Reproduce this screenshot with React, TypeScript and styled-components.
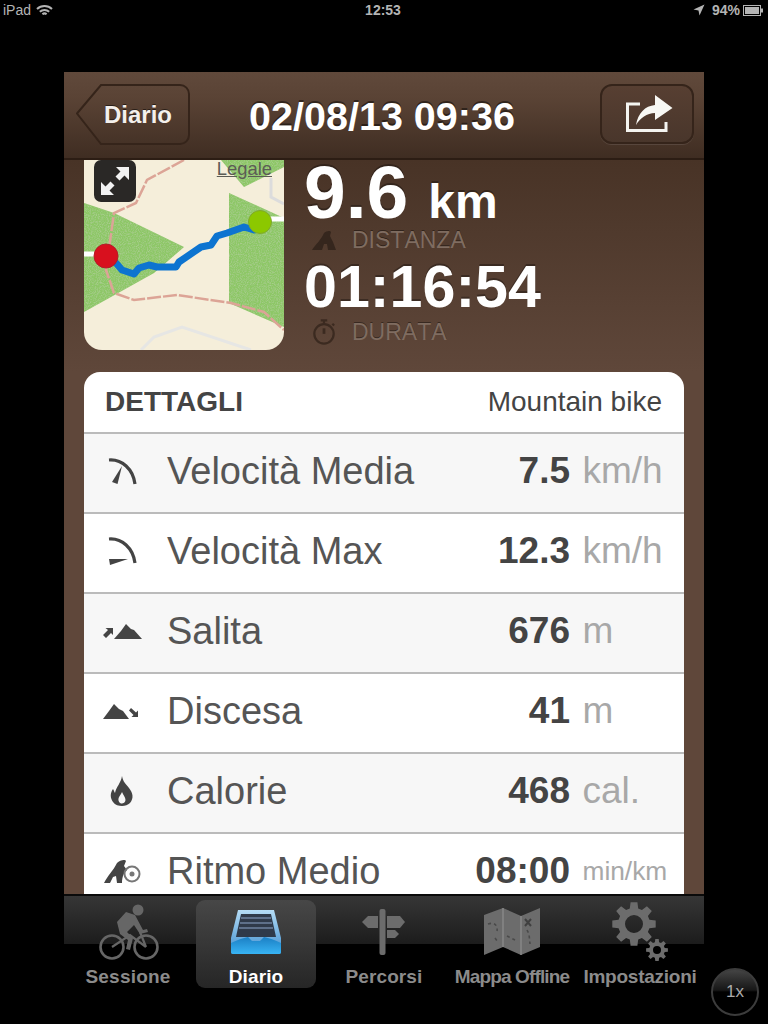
import React from 'react';
import styled, { createGlobalStyle } from 'styled-components';

const GlobalStyle = createGlobalStyle`
  html, body {
    margin: 0;
    background: #000;
    font-family: "Liberation Sans", Arial, sans-serif;
  }
`;

const Screen = styled.div`
  position: relative;
  width: 768px;
  height: 1024px;
  background: #000;
  overflow: hidden;
  display: flex;
  flex-direction: column;
  align-items: center;
`;

const StatusBar = styled.div`
  width: 100%;
  height: 20px;
  box-sizing: border-box;
  padding: 0 5px 0 3px;
  display: grid;
  grid-template-columns: 1fr auto 1fr;
  align-items: center;
  color: #b4b4b4;
  font-size: 14px;
`;

const StatusGroup = styled.div<{ $end?: boolean }>`
  display: flex;
  align-items: center;
  gap: ${(p) => (p.$end ? '3px' : '5px')};
  justify-content: ${(p) => (p.$end ? 'flex-end' : 'flex-start')};
`;

const StatusStrong = styled.span`
  font-weight: 700;
`;

const LocationGlyph = styled.svg`
  margin-right: 4px;
`;

const AppFrame = styled.div`
  margin-top: 52px;
  width: 640px;
  height: 822px;
  flex: none;
  display: flex;
  flex-direction: column;
  overflow: hidden;
  background: linear-gradient(#483326 88px, #5f473a 300px);
`;

const NavBar = styled.header`
  flex: none;
  height: 88px;
  box-sizing: border-box;
  padding: 12px 10px 0 12px;
  display: flex;
  justify-content: space-between;
  align-items: flex-start;
  background: linear-gradient(#60493b, #5a4335 30%, #3f2d22);
  border-bottom: 2px solid #2c1d14;
`;

const BackButton = styled.div`
  position: relative;
  width: 114px;
  height: 61px;
  display: flex;
  align-items: center;
  justify-content: flex-end;
  padding-right: 18px;
  box-sizing: border-box;
  color: #f4f0ec;
  font-size: 24px;
  font-weight: 700;
  text-shadow: 0 -1px 0 rgba(0, 0, 0, .5);
`;

const BackShape = styled.svg`
  position: absolute;
  left: 0;
  top: 0;
`;

const BackLabel = styled.span`
  position: relative;
`;

const NavTitle = styled.h1`
  margin: 0 26px 0 0;
  color: #fff;
  font-size: 39.5px;
  line-height: 64px;
  font-weight: 700;
  text-shadow: 0 -2px 0 rgba(0, 0, 0, .45);
`;

const ShareButton = styled.div`
  width: 94px;
  height: 60px;
  box-sizing: border-box;
  padding-left: 7px;
  border: 2px solid #35241a;
  border-radius: 12px;
  background: linear-gradient(#573f32, #49362b);
  box-shadow: 0 1px 0 rgba(255, 255, 255, .1);
  display: flex;
  align-items: center;
  justify-content: center;
`;

const Content = styled.main`
  flex: 1;
  min-height: 0;
  padding: 0 20px;
`;

const Summary = styled.section`
  display: flex;
  gap: 20px;
`;

const MapFrame = styled.div`
  position: relative;
  flex: none;
  width: 200px;
  height: 190px;
`;

const MapDrawing = styled.svg`
  display: block;
  border-radius: 0 0 18px 18px;
`;

const LegalLink = styled.span`
  position: absolute;
  top: 0;
  right: 12px;
  color: #5c5c55;
  font-size: 18.4px;
  line-height: 18px;
  text-decoration: underline;
`;

const ExpandButton = styled.div`
  position: absolute;
  left: 10px;
  top: 0;
  width: 42px;
  height: 42px;
  border-radius: 7px;
  background: #2a2826;
  display: flex;
  align-items: center;
  justify-content: center;
`;

const Stats = styled.div`
  display: flex;
  flex-direction: column;
`;

const StatValue = styled.div<{ $large?: boolean }>`
  color: #fff;
  font-weight: 700;
  font-size: ${(p) => (p.$large ? '75px' : '59.2px')};
  line-height: ${(p) => (p.$large ? '64px' : '58px')};
  text-shadow: 0 -2px 0 rgba(0, 0, 0, .3);
`;

const StatUnit = styled.span`
  font-size: 48px;
  line-height: 0;
  margin-left: 20px;
`;

const StatCaption = styled.div`
  display: flex;
  align-items: center;
  height: 26px;
  margin: 3px 0 5px;
  gap: 16px;
  padding-left: 8px;
  color: #7f6c60;
  font-size: 23px;
  font-kerning: none;
  text-shadow: 0 -1px 0 rgba(0, 0, 0, .4);
`;

const DetailCard = styled.section`
  margin-top: 22px;
  background: #fff;
  border-radius: 16px 16px 0 0;
  overflow: hidden;
`;

const DetailHeader = styled.div`
  height: 60px;
  box-sizing: border-box;
  padding: 0 22px 0 21px;
  display: flex;
  justify-content: space-between;
  align-items: center;
`;

const DetailTitle = styled.span`
  color: #444;
  font-size: 28px;
  font-weight: 700;
`;

const DetailSport = styled.span`
  color: #444;
  font-size: 28px;
`;

const DetailRow = styled.div<{ $shaded: boolean }>`
  height: 80px;
  box-sizing: border-box;
  border-top: 2px solid #bbb;
  padding-bottom: 4px;
  display: grid;
  grid-template-columns: 76px 1fr auto 114px;
  align-items: center;
  background: ${(p) => (p.$shaded ? '#f7f7f7' : '#fff')};
`;

const RowIcon = styled.div`
  display: flex;
  justify-content: center;
  color: #444;
`;

const RowLabel = styled.span`
  margin-left: 7px;
  color: #555;
  font-size: 38px;
`;

const RowValue = styled.span`
  color: #444;
  font-size: 37px;
  font-weight: 700;
`;

const RowUnit = styled.span<{ $small?: boolean }>`
  padding-left: 12.5px;
  color: #a8a8a8;
  font-size: ${(p) => (p.$small ? '26.3px' : '37px')};
`;

const TabBar = styled.nav`
  flex: none;
  width: 640px;
  height: 96px;
  box-sizing: border-box;
  padding-top: 2px;
  display: grid;
  grid-template-columns: repeat(5, 128px);
  background:
    linear-gradient(#0a0a0a 2px, #363636 2px, #1c1c1c 50px, #000 50px);
`;

const TabItem = styled.div<{ $active?: boolean }>`
  display: flex;
  flex-direction: column;
  align-items: center;
  color: ${(p) => (p.$active ? '#fff' : '#8b8b8b')};
  width: ${(p) => (p.$active ? '120px' : 'auto')};
  justify-self: center;
  height: ${(p) => (p.$active ? '88px' : 'auto')};
  margin-top: ${(p) => (p.$active ? '4px' : '0')};
  border-radius: 9px;
  background: ${(p) => (p.$active ? 'linear-gradient(#474747, #262626)' : 'none')};
`;

const TabIcon = styled.div<{ $active?: boolean }>`
  height: ${(p) => (p.$active ? '67px' : '71px')};
  box-sizing: border-box;
  padding-bottom: ${(p) => (p.$active ? '3px' : '0')};
  display: flex;
  align-items: center;
  justify-content: center;
`;

const TabLabel = styled.span<{ $squeeze: number }>`
  font-size: 19px;
  line-height: 20px;
  font-weight: 700;
  white-space: nowrap;
  letter-spacing: ${(p) => p.$squeeze}px;
`;

const ScaleButton = styled.div`
  position: absolute;
  left: 711px;
  top: 968px;
  width: 48px;
  height: 48px;
  box-sizing: border-box;
  border: 2px solid #3c3c3c;
  border-radius: 50%;
  background: linear-gradient(#444, #161616 46%, #000 50%);
  color: #aaa;
  font-size: 17px;
  display: flex;
  align-items: center;
  justify-content: center;
`;

function gearPath(cx: number, cy: number, outer: number, root: number, hole: number, teeth: number): string {
  const step = (Math.PI * 2) / teeth;
  let d = '';
  for (let i = 0; i < teeth; i++) {
    const a = i * step;
    const pts: [number, number][] = [
      [root, a - step * 0.34],
      [outer, a - step * 0.2],
      [outer, a + step * 0.2],
      [root, a + step * 0.34],
    ];
    pts.forEach(([r, t]) => {
      d += `${d ? 'L' : 'M'}${(cx + r * Math.cos(t)).toFixed(1)} ${(cy + r * Math.sin(t)).toFixed(1)}`;
    });
  }
  d += `Z M${cx - hole} ${cy}a${hole} ${hole} 0 1 0 ${hole * 2} 0a${hole} ${hole} 0 1 0 ${-hole * 2} 0Z`;
  return d;
}

function WifiIcon() {
  return (
    <svg width="17" height="13" viewBox="0 0 17 13" fill="none" stroke="#b4b4b4" strokeWidth="2">
      <path d="M1 5a11 11 0 0 1 15 0" />
      <path d="M3.800 7.800a7 7 0 0 1 9.400 0" />
      <path d="M6.400 10.300a3.200 3.200 0 0 1 4.200 0" />
    </svg>
  );
}

function LocationIcon() {
  return (
    <LocationGlyph width="12" height="12" viewBox="0 0 12 12">
      <path d="M11.500 .5L6.500 11.500 5.500 6.500 .5 5.500Z" fill="#b4b4b4" />
    </LocationGlyph>
  );
}

function BatteryIcon() {
  return (
    <svg width="20" height="11" viewBox="0 0 20 11">
      <rect x=".5" y=".5" width="17" height="10" fill="none" stroke="#b4b4b4" />
      <rect x="2" y="2" width="14" height="7" fill="#b4b4b4" />
      <rect x="18" y="3.500" width="2" height="4" fill="#b4b4b4" />
    </svg>
  );
}

function ShareIcon() {
  return (
    <svg width="50" height="42" viewBox="0 0 50 42">
      <path d="M41 29v8.500H2.500V11H15" fill="none" stroke="#f4f4f0" strokeWidth="3" />
      <path d="M11 32C13 20 20 13 30 12V2L47.500 15 30 27V20C22 20 15 25 11 32Z" fill="#f8f8f4" />
    </svg>
  );
}

function ExpandIcon() {
  return (
    <svg width="32" height="32" viewBox="0 0 32 32" fill="#f2f2f2">
      <path d="M30 2v13l-4.500-4.500-5 5-4-4 5-5L17 2Z" />
      <path d="M2 30V17l4.500 4.500 5-5 4 4-5 5L15 30Z" />
    </svg>
  );
}

function RoadIcon() {
  return (
    <svg width="24" height="20" viewBox="0 0 24 20" fill="#35261d">
      <path d="M0 20C4 14 9 10 12 3c2-2 6-3 7-1l-1 4 3 6 3 8H16l-1-6-3 0-2 6Z" />
    </svg>
  );
}

function StopwatchIcon() {
  return (
    <svg width="24" height="28" viewBox="0 0 26 28" fill="none" stroke="#3b2a20" strokeWidth="2.400">
      <circle cx="13" cy="16" r="10.500" />
      <path d="M13 1.500v4M9.500 1.500h7M22 5l2 2" />
      <path d="M13 10v6" strokeWidth="3" />
    </svg>
  );
}

function AverageGauge() {
  return (
    <svg width="30" height="30" viewBox="0 0 30 30">
      <path d="M2 4C15 3 26 13 28 28" fill="none" stroke="#444" strokeWidth="3.200" />
      <path d="M15 10L10.500 28 5 26Z" fill="#444" />
    </svg>
  );
}

function MaxGauge() {
  return (
    <svg width="30" height="30" viewBox="0 0 30 30">
      <path d="M2 3C15 2 26 12 28 27" fill="none" stroke="#444" strokeWidth="3.200" />
      <path d="M21 23L3 29 2 23Z" fill="#444" />
    </svg>
  );
}

function ClimbIcon() {
  return (
    <svg width="40" height="18" viewBox="0 0 40 18" fill="#444">
      <path d="M12 17l7-8 5-7 5 5 3 1 8 9Z" />
      <path d="M1 13L6 8 3.500 6H11v7L9 11 4 16Z" />
    </svg>
  );
}

function DescentIcon() {
  return (
    <svg width="40" height="18" viewBox="0 0 40 18" fill="#444">
      <path d="M1 17l6-8 5-7 5 5 4 2 6 8Z" />
      <path d="M29 6l5 4.500 2-2V15h-6.500l2-2L27 8.500Z" />
    </svg>
  );
}

function FlameIcon() {
  return (
    <svg width="24" height="30" viewBox="0 0 24 30" fill="#444">
      <path
        fillRule="evenodd"
        d="M12 0c1 6 4 8 7 12 4 5 5 10 1 15-2 2-5 3-8 3s-7-1-9-4c-3-4-3-9 0-13 1 1 1 3 2 4 1-6 6-10 7-17ZM12 16c-1 3-4 5-3.500 8.500 .5 2.500 2.500 3 3.500 3s3.500-1 3.500-3.500c0-3-2.500-5-3.500-8Z"
      />
    </svg>
  );
}

function PaceIcon() {
  return (
    <svg width="38" height="26" viewBox="0 0 38 26">
      <path d="M1 25C5 17 10 13 14 5c3-3 8-4 9-2l-2 5 3 4c-3 2-5 7-5 13h-5l-1-7-3 1-3 6Z" fill="#444" />
      <circle cx="29" cy="16" r="7.500" fill="none" stroke="#777" strokeWidth="2" />
      <circle cx="29" cy="16" r="2.500" fill="#777" />
    </svg>
  );
}

function BikeIcon() {
  return (
    <svg width="62" height="56" viewBox="0 0 62 56" fill="none" stroke="#666">
      <circle cx="15" cy="43" r="11.500" strokeWidth="2.600" />
      <circle cx="49" cy="43" r="11.500" strokeWidth="2.600" />
      <circle cx="41" cy="6" r="5.500" fill="#666" stroke="none" />
      <path
        d="M29 8l9 3 8 15 4-1 1 3-8 2-6-9-7 7 6 6-3 12-4-1 2-9-8-6-3-12Z"
        fill="#666"
        stroke="none"
      />
      <path d="M15 43L33 31 49 43M43 28l6 15" strokeWidth="2.200" />
    </svg>
  );
}

function DrawerIcon() {
  return (
    <svg width="50" height="44" viewBox="0 0 50 44">
      <defs>
        <linearGradient id="drawerFront" x1="0" y1="0" x2="0" y2="1">
          <stop offset="0" stopColor="#1b7fc4" />
          <stop offset="1" stopColor="#38b4f4" />
        </linearGradient>
        <linearGradient id="drawerBack" x1="0" y1="0" x2="0" y2="1">
          <stop offset="0" stopColor="#b5dcf5" />
          <stop offset="1" stopColor="#3f8fd0" />
        </linearGradient>
      </defs>
      <path d="M7 0H43L50 28V42a2 2 0 0 1-2 2H2a2 2 0 0 1-2-2V28Z" fill="url(#drawerBack)" />
      <path d="M10 4H40L45 27H5Z" fill="#2f3a4a" />
      <path d="M10 8H40M9 13H41M8 18H42" stroke="#5e708a" strokeWidth="2" />
      <path d="M0 33C6 30 12 28 17 27L21 31H29L33 27C38 28 44 30 50 33V42a2 2 0 0 1-2 2H2a2 2 0 0 1-2-2Z" fill="url(#drawerFront)" />
    </svg>
  );
}

function SignpostIcon() {
  return (
    <svg width="44" height="46" viewBox="0 0 44 46" fill="#6c6c6c">
      <rect x="17.500" y="0" width="6" height="46" rx="2" />
      <path d="M0 13L6 7H16V19H6Z" />
      <path d="M25 7H38L43 13 38 19H25Z" />
      <path d="M25 21H33L37 25 33 29H25Z" />
    </svg>
  );
}

function FoldedMapIcon() {
  return (
    <svg width="58" height="48" viewBox="0 0 58 48">
      <path d="M1 7L20 0 38 8 57 0V39L38 47 20 39 1 47Z" fill="#6c6c6c" />
      <path d="M20 0V39M38 8V47" stroke="#868686" strokeWidth="1.500" />
      <path d="M5 16C11 14 15 17 14 23M12 30l3 4M24 28l8 4M44 22l2 4 1 10" fill="none" stroke="#4a4a4a" strokeWidth="1.600" strokeDasharray="3 3" />
      <path d="M42 11l6 7M48 11l-6 7" stroke="#404040" strokeWidth="2" />
    </svg>
  );
}

function GearsIcon() {
  return (
    <svg width="58" height="60" viewBox="0 0 58 60" fill="#6c6c6c">
      <path fillRule="evenodd" d={gearPath(23, 22, 22, 16, 9, 8)} />
      <path fillRule="evenodd" d={gearPath(46, 48, 11, 8, 4, 8)} />
    </svg>
  );
}

function MapArtwork() {
  return (
    <MapDrawing width="200" height="190" viewBox="0 0 200 190">
      <defs>
        <filter id="grass" x="0" y="0" width="100%" height="100%">
          <feTurbulence type="fractalNoise" baseFrequency=".9" numOctaves="2" seed="4" result="noise" />
          <feColorMatrix in="noise" type="matrix" values="0 0 0 0 .42  0 0 0 0 .62  0 0 0 0 .3  0 0 0 2 -.8" result="speck" />
          <feComposite in="speck" in2="SourceAlpha" operator="in" result="clipped" />
          <feMerge>
            <feMergeNode in="SourceGraphic" />
            <feMergeNode in="clipped" />
          </feMerge>
        </filter>
      </defs>
      <rect width="200" height="190" fill="#f5eeda" />
      <g filter="url(#grass)" fill="#8dc766">
        <path d="M0 43L30 53 100 87 70 113 0 152Z" />
        <path d="M145 33L200 58V167L145 143Z" />
        <path d="M137 0L160 27 200 7V0Z" />
      </g>
      <path d="M57 190L70 177 98 167 167 190" fill="none" stroke="#e6e6e4" strokeWidth="3" />
      <path d="M187 18V37L200 44" fill="none" stroke="#dcdcdc" strokeWidth="3" />
      <path
        d="M100 0L63 20 52 43 30 53 22 110 30 133 50 140 93 135 147 143 180 152 200 170"
        fill="none"
        stroke="#dca496"
        strokeWidth="2.500"
        strokeDasharray="14 2"
      />
      <path d="M0 94H14M180 59H200" stroke="#fff" strokeWidth="5" />
      <path
        d="M32 103L38 110 50 114 55 108 65 105 73 107 92 107 95 102 117 87 127 85 133 76 143 73 160 67 170 70"
        fill="none"
        stroke="#0d74d0"
        strokeWidth="7"
        strokeLinejoin="round"
        strokeLinecap="round"
      />
      <circle cx="22" cy="96" r="12" fill="#d8101e" stroke="#b0202a" />
      <circle cx="176" cy="62" r="11.500" fill="#8cc800" stroke="#7fa82e" />
    </MapDrawing>
  );
}

const details = [
  { icon: <AverageGauge />, label: 'Velocità Media', value: '7.5', unit: 'km/h' },
  { icon: <MaxGauge />, label: 'Velocità Max', value: '12.3', unit: 'km/h' },
  { icon: <ClimbIcon />, label: 'Salita', value: '676', unit: 'm' },
  { icon: <DescentIcon />, label: 'Discesa', value: '41', unit: 'm' },
  { icon: <FlameIcon />, label: 'Calorie', value: '468', unit: 'cal.' },
  { icon: <PaceIcon />, label: 'Ritmo Medio', value: '08:00', unit: 'min/km', small: true },
];

const tabs = [
  { icon: <BikeIcon />, label: 'Sessione', squeeze: 0.2 },
  { icon: <DrawerIcon />, label: 'Diario', squeeze: 0.1 },
  { icon: <SignpostIcon />, label: 'Percorsi', squeeze: 0.1 },
  { icon: <FoldedMapIcon />, label: 'Mappa Offline', squeeze: -0.85 },
  { icon: <GearsIcon />, label: 'Impostazioni', squeeze: -0.25 },
];

export default function App(): React.JSX.Element {
  return (
    <Screen>
      <GlobalStyle />
      <StatusBar>
        <StatusGroup>
          iPad
          <WifiIcon />
        </StatusGroup>
        <StatusStrong>12:53</StatusStrong>
        <StatusGroup $end>
          <LocationIcon />
          <StatusStrong>94%</StatusStrong>
          <BatteryIcon />
        </StatusGroup>
      </StatusBar>

      <AppFrame>
        <NavBar>
          <BackButton>
            <BackShape width="114" height="61" viewBox="0 0 114 61">
              <path
                d="M1 29.500L25 1H104a9 9 0 0 1 9 9V51a9 9 0 0 1-9 9H25Z"
                fill="none"
                stroke="#35241a"
                strokeWidth="2"
              />
            </BackShape>
            <BackLabel>Diario</BackLabel>
          </BackButton>
          <NavTitle>02/08/13 09:36</NavTitle>
          <ShareButton>
            <ShareIcon />
          </ShareButton>
        </NavBar>

        <Content>
          <Summary>
            <MapFrame>
              <MapArtwork />
              <LegalLink>Legale</LegalLink>
              <ExpandButton>
                <ExpandIcon />
              </ExpandButton>
            </MapFrame>
            <Stats>
              <StatValue $large>
                9.6<StatUnit>km</StatUnit>
              </StatValue>
              <StatCaption>
                <RoadIcon />
                DISTANZA
              </StatCaption>
              <StatValue>01:16:54</StatValue>
              <StatCaption>
                <StopwatchIcon />
                DURATA
              </StatCaption>
            </Stats>
          </Summary>

          <DetailCard>
            <DetailHeader>
              <DetailTitle>DETTAGLI</DetailTitle>
              <DetailSport>Mountain bike</DetailSport>
            </DetailHeader>
            {details.map((row, i) => (
              <DetailRow key={row.label} $shaded={i % 2 === 0}>
                <RowIcon>{row.icon}</RowIcon>
                <RowLabel>{row.label}</RowLabel>
                <RowValue>{row.value}</RowValue>
                <RowUnit $small={row.small}>{row.unit}</RowUnit>
              </DetailRow>
            ))}
          </DetailCard>
        </Content>
      </AppFrame>

      <TabBar>
        {tabs.map((tab) => {
          const active = tab.label === 'Diario';
          return (
            <TabItem key={tab.label} $active={active}>
              <TabIcon $active={active}>{tab.icon}</TabIcon>
              <TabLabel $squeeze={tab.squeeze}>{tab.label}</TabLabel>
            </TabItem>
          );
        })}
      </TabBar>

      <ScaleButton>1x</ScaleButton>
    </Screen>
  );
}
